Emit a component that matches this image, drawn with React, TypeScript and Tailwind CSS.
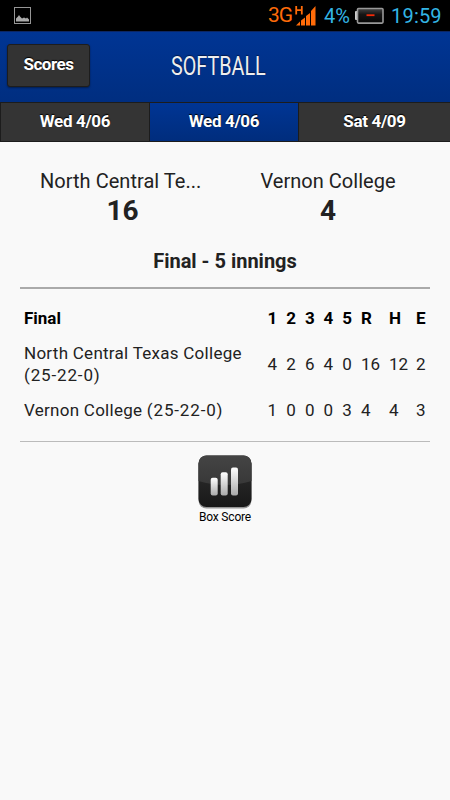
interface GameTab {
  readonly label: string;
  readonly active?: boolean;
}

interface TeamLine {
  readonly team: string;
  readonly record: string;
  readonly innings: readonly number[];
  readonly totals: readonly number[];
}

const TABS: readonly GameTab[] = [
  { label: "Wed 4/06" },
  { label: "Wed 4/06", active: true },
  { label: "Sat 4/09" },
];

const LINES: readonly TeamLine[] = [
  {
    team: "North Central Texas College",
    record: "(25-22-0)",
    innings: [4, 2, 6, 4, 0],
    totals: [16, 12, 2],
  },
  {
    team: "Vernon College",
    record: "(25-22-0)",
    innings: [1, 0, 0, 0, 3],
    totals: [4, 4, 3],
  },
];

const HEADINGS = ["1", "2", "3", "4", "5", "R", "H", "E"];

const GRID =
  "grid grid-cols-[243.5px_18.7px_18.7px_18.7px_18.7px_18.7px_28px_27px_14px] items-center pl-1";

function StatusBar() {
  return (
    <div className="flex h-[31px] items-center bg-black pl-[14px] pr-2">
      <svg width="17" height="18" viewBox="0 0 17 18" className="mt-px">
        <rect x="0.5" y="0.5" width="16" height="16" fill="none" stroke="#969696" />
        <path d="M2 14.5v-3l2-2 1-1.5 1 1.5 2 2 2-1 2 1 1-1 2 2v2z" fill="#aaa" />
      </svg>
      <div className="flex-1" />
      <span className="mr-[3px] w-[24px] text-[21px] leading-[31px] tracking-[-1px] text-[#ff6b09]">
        3G
      </span>
      <svg width="22" height="20" viewBox="0 0 22 20" className="mr-[7px]">
        <path d="M1.2 0v8.5M6.8 0v8.5M1 4.2h6" stroke="#ff6b09" strokeWidth="1.8" />
        <path
          d="M1 19.5l4-4v4zM6 14.5l4-3v8H6zM11 10l4-3v12.5h-4zM16 5l4.5-5v19.5H16z"
          fill="#ff6b09"
        />
      </svg>
      <span className="w-[31px] pt-[2px] text-[20px] leading-[31px] text-[#33b5e5]">4%</span>
      <svg width="29" height="18" viewBox="0 0 29 18" className="mr-[7px]">
        <defs>
          <linearGradient id="cell" x1="0" y1="0" x2="0" y2="1">
            <stop offset="0" stopColor="#444" />
            <stop offset="0.4" stopColor="#151515" />
            <stop offset="1" stopColor="#050505" />
          </linearGradient>
        </defs>
        <rect x="0" y="4" width="3" height="9" rx="1" fill="#ccc" />
        <rect x="2.5" y="1.5" width="25.5" height="14.6" rx="1" fill="url(#cell)" stroke="#999" strokeWidth="1.6" />
        <path d="M11.5 8.2h8" stroke="#f32a08" strokeWidth="1.8" />
      </svg>
      <span className="w-[51px] pt-[2px] text-[20px] leading-[31px] tracking-[0.2px] text-[#33b5e5]">
        19:59
      </span>
    </div>
  );
}

function Header() {
  return (
    <header className="grid h-[71px] grid-cols-[1fr_auto_1fr] items-center border-t border-[#0c2663] bg-linear-to-b from-[#003594] to-[#002e80] px-[7px]">
      <button className="-mt-[3px] h-[43px] w-[83px] rounded-[3px] border border-[#1d1d1d] bg-[#333] pb-[2px] text-[17px] font-bold tracking-[-0.45px] text-white shadow-[0_1px_2px_rgba(0,0,0,0.4)] [text-shadow:0_-1px_1px_#000]">
        Scores
      </button>
      <h1 className="w-[109px] text-[25px] font-normal text-[#eee] [text-shadow:0_-1px_1px_#001b50]">
        <span className="inline-block origin-left scale-x-[0.79]">SOFTBALL</span>
      </h1>
    </header>
  );
}

function GameTabs() {
  return (
    <nav className="grid h-[40px] grid-cols-[149px_149px_152px] border-y border-[#1c1c1c]">
      {TABS.map((tab, i) => (
        <button
          key={i}
          className={`border-l border-[#1c1c1c] text-[17px] font-bold tracking-[-0.35px] text-white [text-shadow:0_-1px_1px_#000] ${
            tab.active
              ? "bg-linear-to-b from-[#003594] to-[#002d7d]"
              : "bg-[#343434]"
          }`}
        >
          {tab.label}
        </button>
      ))}
    </nav>
  );
}

function TeamScore({ name, score }: { readonly name: string; readonly score: number }) {
  return (
    <div className="w-[160px] text-center">
      <div className="whitespace-nowrap text-[20px] leading-[26px] tracking-[0.03px]">{name}</div>
      <div className={`mt-px text-[28px] font-bold leading-[32px] ${score > 9 ? "pl-[5px]" : ""}`}>
        {score}
      </div>
    </div>
  );
}

function LineScore() {
  return (
    <section className="mx-5 h-[155px] border-b border-[#bbb] border-t-2 border-t-[#aaa] pt-[18px] text-[17px] leading-[22px]">
      <div className={`${GRID} font-bold text-black`}>
        <span>Final</span>
        {HEADINGS.map((h) => (
          <span key={h}>{h}</span>
        ))}
      </div>
      {LINES.map((line) => (
        <div key={line.team} className={`${GRID} mt-[13px]`}>
          <span className="pr-4 tracking-[0.27px]">
            {line.team} <span className="tracking-[0.85px]">{line.record}</span>
          </span>
          {[...line.innings, ...line.totals].map((n, i) => (
            <span key={i}>{n}</span>
          ))}
        </div>
      ))}
    </section>
  );
}

function BoxScoreButton() {
  return (
    <button className="mx-auto mt-[13px] flex w-[60px] flex-col items-center">
      <svg width="56" height="55" viewBox="0 0 56 55">
        <defs>
          <linearGradient id="tile" x1="0" y1="0" x2="0" y2="1">
            <stop offset="0" stopColor="#333" />
            <stop offset="1" stopColor="#181818" />
          </linearGradient>
          <linearGradient id="gloss" x1="0" y1="0" x2="0" y2="1">
            <stop offset="0" stopColor="#444" />
            <stop offset="1" stopColor="#383838" />
          </linearGradient>
          <linearGradient id="bar" x1="0" y1="0" x2="0" y2="1">
            <stop offset="0" stopColor="#fff" />
            <stop offset="1" stopColor="#aaa" />
          </linearGradient>
        </defs>
        <rect x="1.5" y="1.5" width="53" height="52" rx="8" fill="#000" opacity="0.4" />
        <rect x="1.5" y="0.5" width="53" height="51.5" rx="8" fill="url(#tile)" />
        <path d="M1.5 26V8.5a8 8 0 0 1 8-8h37a8 8 0 0 1 8 8V26Q28 34 1.5 26z" fill="url(#gloss)" />
        <rect x="13.7" y="22.8" width="7" height="17.7" rx="2" fill="url(#bar)" />
        <rect x="23.7" y="17.3" width="7" height="23.2" rx="2" fill="url(#bar)" />
        <rect x="34" y="12.5" width="7" height="28" rx="2" fill="url(#bar)" />
      </svg>
      <span className="whitespace-nowrap text-[12px] leading-[14px] tracking-[-0.2px] text-black">
        Box Score
      </span>
    </button>
  );
}

function App() {
  return (
    <div className="h-[800px] w-[450px] overflow-hidden bg-[#f9f9f9] font-[Roboto,sans-serif] text-[#222]">
      <StatusBar />
      <Header />
      <GameTabs />
      <div className="flex justify-between pl-[40px] pr-[42px] pt-[26px]">
        <TeamScore name="North Central Te..." score={16} />
        <TeamScore name="Vernon College" score={4} />
      </div>
      <h2 className="mb-[13px] mt-[21px] text-center text-[20px] font-bold leading-[26px]">
        Final - 5 innings
      </h2>
      <LineScore />
      <BoxScoreButton />
    </div>
  );
}

export default App;
